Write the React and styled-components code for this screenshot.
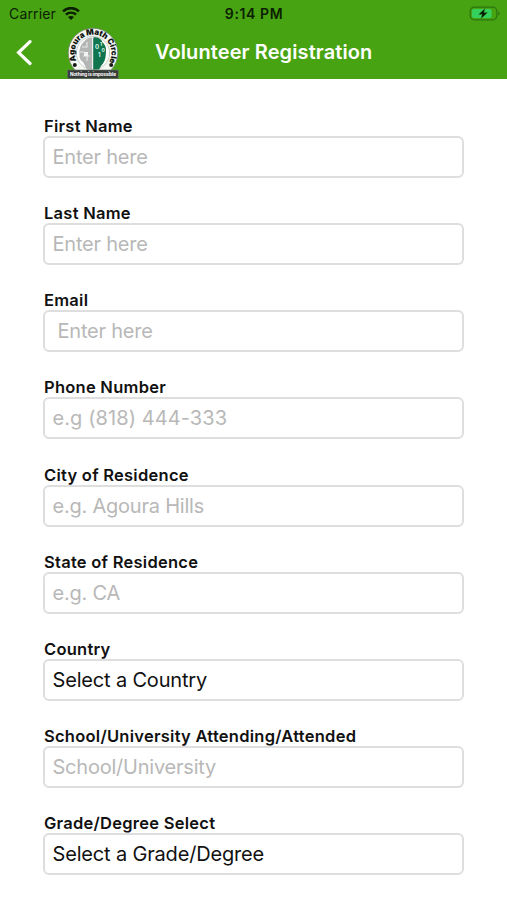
import React from "react";
import styled, { createGlobalStyle } from "styled-components";

const fields = [
  { label: "First Name", hint: "Enter here" },
  { label: "Last Name", hint: "Enter here" },
  { label: "Email", hint: "Enter here", indent: 5 },
  { label: "Phone Number", hint: "e.g (818) 444-333", spacing: 0.08 },
  { label: "City of Residence", hint: "e.g. Agoura Hills" },
  { label: "State of Residence", hint: "e.g. CA" },
  { label: "Country", picker: "Select a Country" },
  { label: "School/University Attending/Attended", hint: "School/University" },
  { label: "Grade/Degree Select", picker: "Select a Grade/Degree" },
];

function WifiIcon() {
  return (
    <svg width="18" height="14" viewBox="0 0 18 14" fill="none">
      <path d="M1 4.4C5.4 0 12.6 0 17 4.4" stroke="#0b2002" strokeWidth="2.6" />
      <path d="M3.9 7.7C6.7 4.9 11.3 4.9 14.1 7.7" stroke="#0b2002" strokeWidth="2.4" />
      <path d="M9 13L6 10C7.6 8.5 10.4 8.5 12 10Z" fill="#0b2002" />
    </svg>
  );
}

function BatteryIcon() {
  return (
    <svg width="32" height="16" viewBox="0 0 32 16">
      <rect x="1.2" y="1.2" width="26.6" height="12.6" rx="4" fill="none" stroke="#2c7410" strokeWidth="1.2" />
      <path d="M29.3 5.2C31.2 6 31.2 9 29.3 9.8Z" fill="#2c7410" />
      <rect x="3" y="3" width="19.6" height="9" rx="2" fill="#35d15e" />
      <path d="M16.2 2.2L9.4 8.5H13.1L11.9 13L18.6 6.6H14.9Z" fill="#071a04" stroke="#3aa52a" strokeWidth="0.4" />
    </svg>
  );
}

function MathCircleLogo() {
  return (
    <LogoSvg width="52" height="53" viewBox="0 0 52 53">
      <defs>
        <path id="logoArc" d="M9.3 33.8A18.4 18.4 0 1 1 42.7 33.8" />
      </defs>
      <circle cx="26" cy="26" r="24.8" fill="#f4f7f2" stroke="#71836b" strokeWidth="0.8" />
      <circle cx="26" cy="26" r="16.6" fill="#fff" stroke="#a9b2a8" strokeWidth="0.6" />
      <path
        d="M25.2 10.5C21 10 18.6 12.5 16.5 15C13.3 18 12.1 22 12.5 27C12.1 31 13.5 33.5 16 35L20 42.5H25.2Z"
        fill="#b3b6b5"
      />
      <path
        d="M26.2 10.5C31 9.8 34.4 12 35.6 15.5C38.8 18 39.6 22 38.8 27C38.8 32 37 36 34 39L32 42.5H26.2Z"
        fill="#10744e"
      />
      <path d="M15 20H20V15M16 29H23M20 25V34M13 25H17" fill="none" stroke="#e7e9e8" strokeWidth="1.1" />
      <rect x="17" y="25" width="4" height="4" fill="#f1f2f1" />
      <g fill="#d9f2e8" fontFamily="Inter, sans-serif" fontWeight="700">
        <text x="28" y="22" fontSize="6">0</text>
        <text x="33" y="19" fontSize="5">1</text>
        <text x="31" y="29.5" fontSize="6">1</text>
        <text x="34.5" y="25" fontSize="5">0</text>
      </g>
      <circle cx="7.8" cy="38" r="2" fill="#171b17" />
      <circle cx="44.2" cy="38" r="2" fill="#171b17" />
      <text fill="#111511" fontFamily="Inter, sans-serif" fontSize="8" fontWeight="900">
        <textPath href="#logoArc" textLength="75">
          Agoura Math Circle
        </textPath>
      </text>
      <rect x="0.6" y="43" width="50.6" height="8.6" fill="#373b39" stroke="#697469" strokeWidth="0.6" />
      <text
        x="26"
        y="49.2"
        textAnchor="middle"
        textLength="46"
        fill="#fff"
        fontFamily="Inter, sans-serif"
        fontSize="4.7"
        fontWeight="700"
      >
        Nothing is impossible
      </text>
    </LogoSvg>
  );
}

function App() {
  return (
    <Screen>
      <GlobalStyle />
      <Header>
        <StatusBar>
          <Carrier>
            <span>Carrier</span>
            <WifiIcon />
          </Carrier>
          <Clock>9:14 PM</Clock>
          <Battery>
            <BatteryIcon />
          </Battery>
        </StatusBar>
        <NavBar>
          <BackButton aria-label="Back">
            <svg width="16" height="28" viewBox="0 0 16 28" fill="none">
              <path d="M14 2.7L2.6 13.6L14 24.5" stroke="#fff" strokeWidth="3.2" strokeLinecap="round" />
            </svg>
          </BackButton>
          <MathCircleLogo />
          <Title>Volunteer Registration</Title>
        </NavBar>
      </Header>
      <Form>
        {fields.map((field) => (
          <Field key={field.label}>
            <Label>{field.label}</Label>
            {field.picker ? (
              <Picker type="button">{field.picker}</Picker>
            ) : (
              <Input placeholder={field.hint} $indent={field.indent} $spacing={field.spacing} />
            )}
          </Field>
        ))}
      </Form>
    </Screen>
  );
}

const GlobalStyle = createGlobalStyle`
  * {
    box-sizing: border-box;
  }
  body {
    margin: 0;
    background: #fff;
    font-family: Inter, "Liberation Sans", sans-serif;
  }
`;
const Screen = styled.div`
  width: 100%;
  height: 900px;
  overflow: hidden;
  background: #fff;
`;
const Header = styled.header`
  height: 79px;
  background: #48a313;
`;
const StatusBar = styled.div`
  height: 27px;
  padding: 0 6px 0 9px;
  display: grid;
  grid-template-columns: 1fr auto 1fr;
  align-items: center;
  color: #0b2002;
  font-size: 14px;
`;
const Carrier = styled.div`
  display: flex;
  align-items: center;
  gap: 6px;
  letter-spacing: 0.15px;
`;
const Clock = styled.div`
  margin-right: 2px;
  font-weight: 600;
  letter-spacing: 0.6px;
`;
const Battery = styled.div`
  display: flex;
  justify-content: flex-end;
`;
const NavBar = styled.div`
  height: 52px;
  display: flex;
  align-items: center;
`;
const BackButton = styled.button`
  width: 67px;
  height: 50px;
  padding: 0 0 0 16px;
  display: flex;
  align-items: center;
  border: none;
  background: none;
`;
const LogoSvg = styled.svg`
  overflow: visible;
`;
const Title = styled.h1`
  margin: 0 0 2px 36px;
  color: #fff;
  font-size: 20px;
  font-weight: 600;
  line-height: 24px;
  letter-spacing: 0.1px;
`;
const Form = styled.form`
  padding: 37px 43px 0;
`;
const Field = styled.div`
  height: 87.17px;
`;
const Label = styled.label`
  display: block;
  height: 20px;
  padding-left: 1px;
  color: #111;
  font-size: 16.5px;
  font-weight: 600;
  line-height: 20px;
  letter-spacing: 0.26px;
`;
const Input = styled.input`
  display: block;
  width: 421px;
  height: 42px;
  padding: 0 8px 0 ${(props) => 7.5 + (props.$indent || 0)}px;
  border: 2px solid #dedede;
  border-radius: 6px;
  background: #fff;
  font-family: inherit;
  font-size: 20px;
  letter-spacing: ${(props) => props.$spacing || -0.22}px;
  outline: none;

  &::placeholder {
    color: #b8b8b8;
    opacity: 1;
  }
`;
const Picker = styled.button`
  display: block;
  width: 421px;
  height: 42px;
  padding: 0 7.5px;
  border: 2px solid #dedede;
  border-radius: 6px;
  background: #fff;
  color: #111;
  font-family: inherit;
  font-size: 20px;
  letter-spacing: -0.17px;
  text-align: left;
`;

export default App;
